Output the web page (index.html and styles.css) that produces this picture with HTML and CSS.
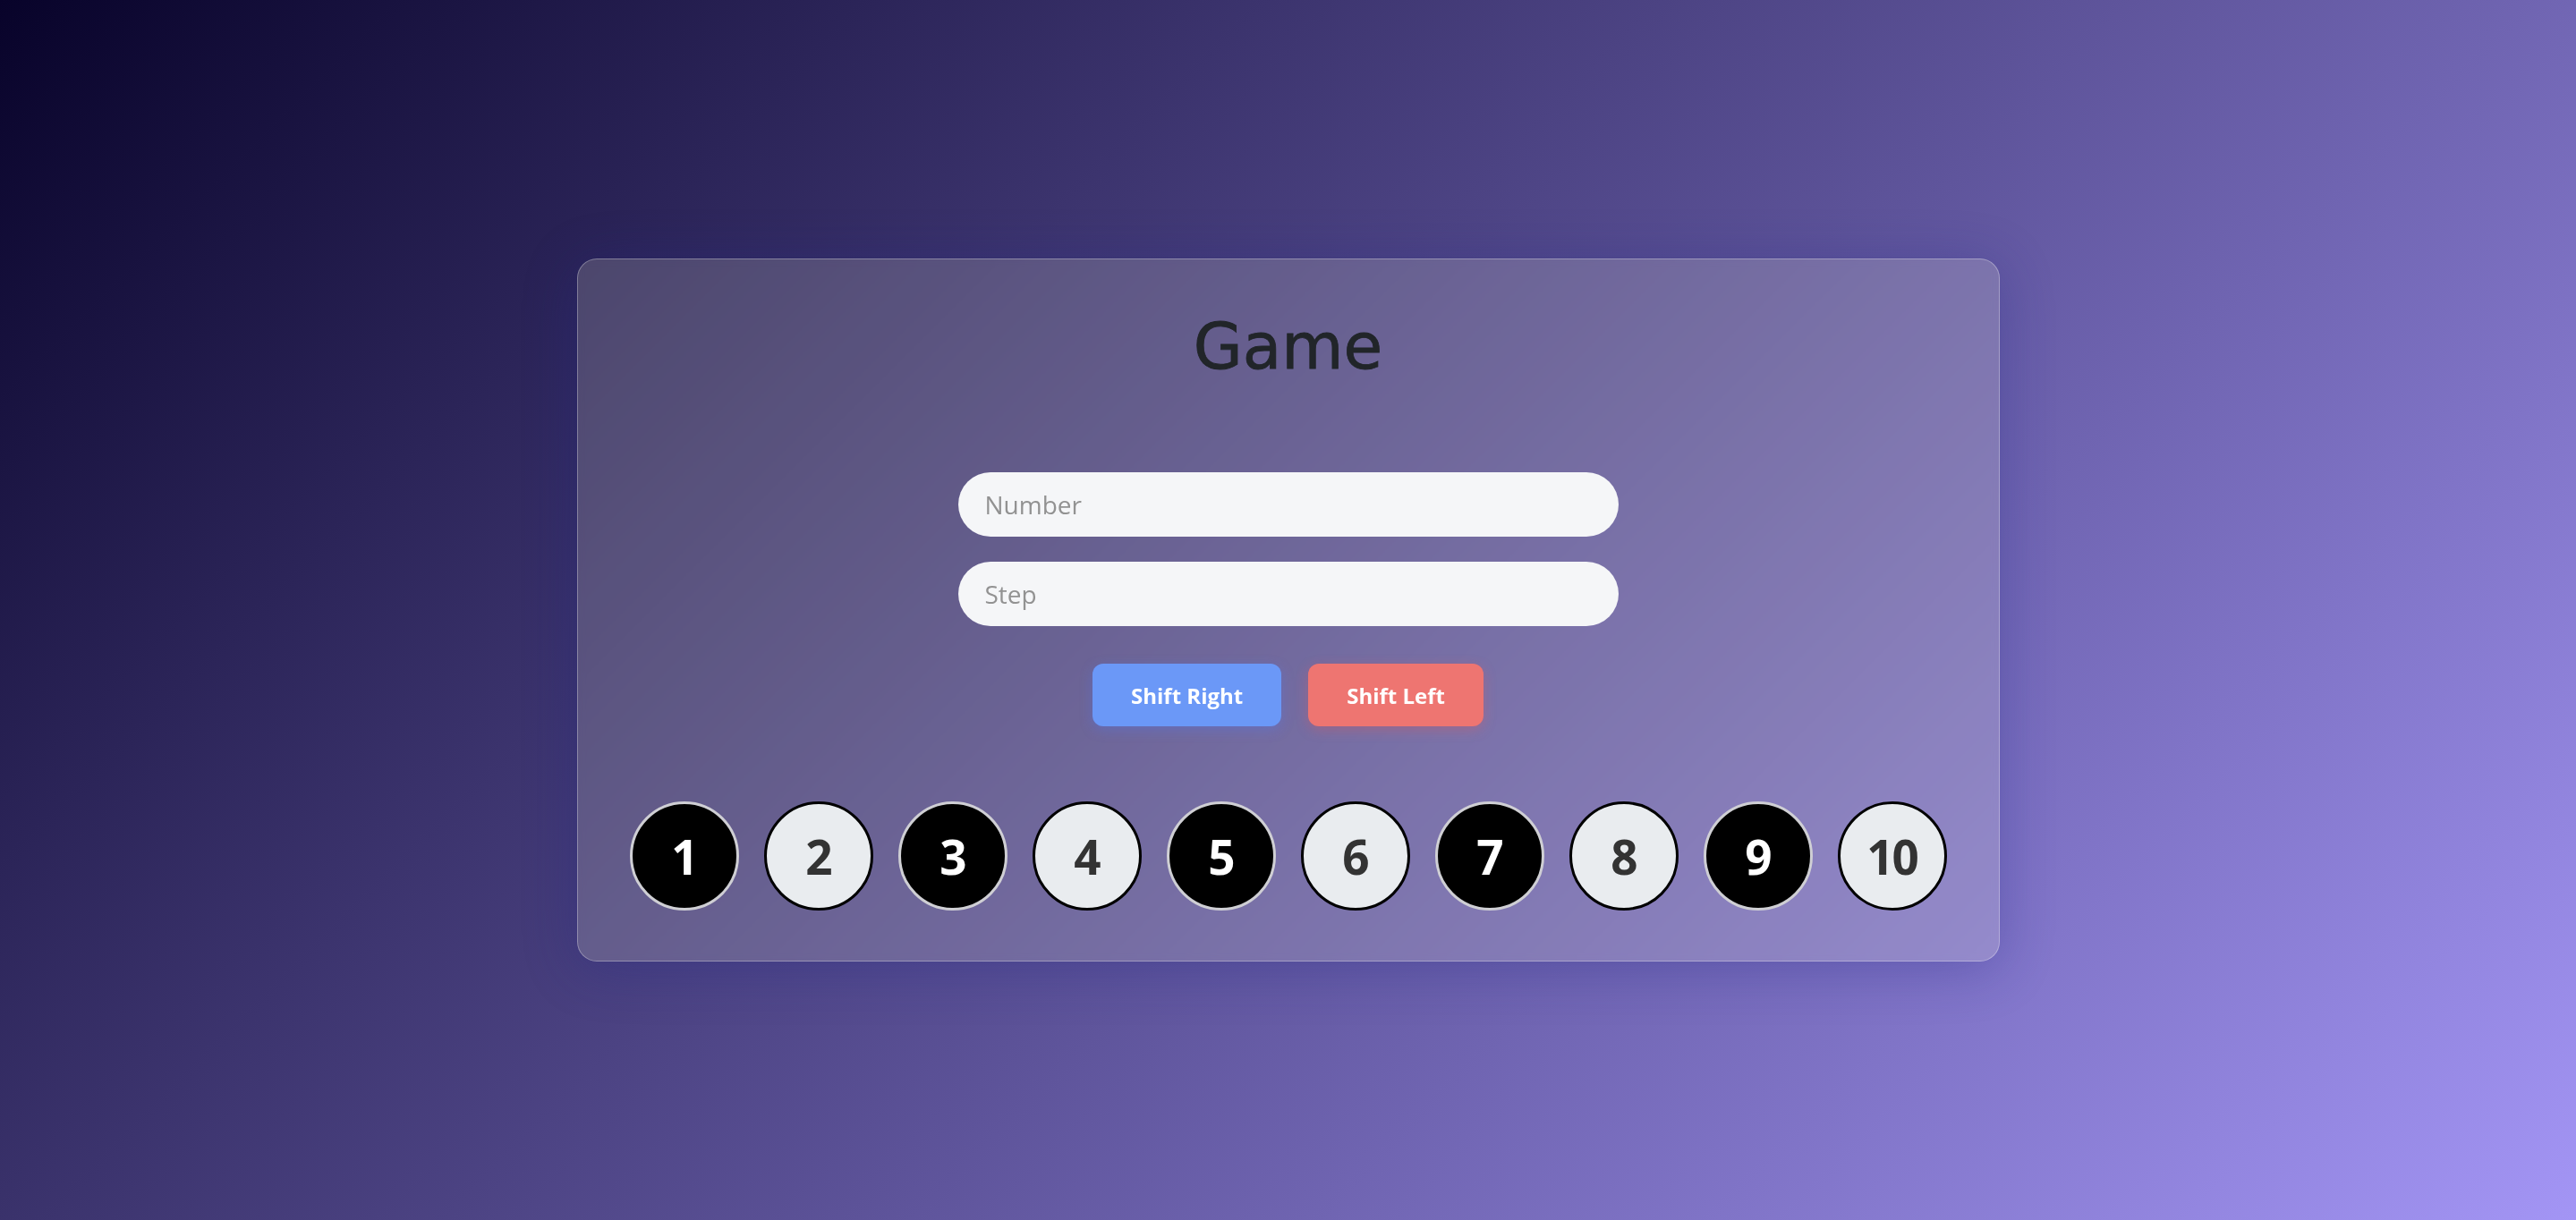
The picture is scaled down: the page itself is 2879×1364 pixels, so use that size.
FILE: index.html
```html
<!DOCTYPE html>
<html lang="en">
<head>
<meta charset="utf-8">
<title>Game</title>
<link rel="stylesheet" href="styles.css">
</head>
<body>
<main class="card">
  <h1 class="title">Game</h1>
  <form class="form">
    <input class="field" type="text" placeholder="Number">
    <input class="field" type="text" placeholder="Step">
    <div class="actions">
      <button type="button" class="btn btn-right">Shift Right</button>
      <button type="button" class="btn btn-left">Shift Left</button>
    </div>
  </form>
  <div class="balls">
    <div class="ball dark">1</div>
    <div class="ball light">2</div>
    <div class="ball dark">3</div>
    <div class="ball light">4</div>
    <div class="ball dark">5</div>
    <div class="ball light">6</div>
    <div class="ball dark">7</div>
    <div class="ball light">8</div>
    <div class="ball dark">9</div>
    <div class="ball light">10</div>
  </div>
</main>
</body>
</html>
```

FILE: styles.css
```css
* { box-sizing: border-box; }

html, body {
  margin: 0;
  height: 100%;
}

body {
  background: linear-gradient(135deg, #08032a 0%, #a395f5 100%);
  display: flex;
  align-items: center;
  justify-content: center;
  font-family: "Open Sans", "Liberation Sans", sans-serif;
}

.card {
  width: 1590px;
  height: 786px;
  border-radius: 22px;
  border: 1px solid rgba(255, 255, 255, 0.3);
  background: rgba(255, 252, 225, 0.16);
  box-shadow: 0 8px 60px rgba(31, 38, 135, 0.32);
  backdrop-filter: blur(4px);
  display: flex;
  flex-direction: column;
  align-items: center;
  padding-top: 56px;
}

.title {
  margin: 0;
  font-family: "DejaVu Sans", "Open Sans", sans-serif;
  font-weight: 400;
  font-size: 71px;
  line-height: 84px;
  color: #212529;
  -webkit-text-stroke: 0.8px #212529;
}

.form {
  margin-top: 98px;
  display: flex;
  flex-direction: column;
  align-items: center;
  gap: 28px;
}

.field {
  width: 738px;
  height: 72px;
  border: none;
  outline: none;
  border-radius: 36px;
  background: #f5f6f8;
  padding: 0 30px;
  font-family: "Open Sans", "Liberation Sans", sans-serif;
  font-size: 28px;
  color: #333;
}

.field::placeholder {
  color: #929292;
}

.actions {
  margin-top: 14px;
  display: flex;
  gap: 30px;
}

.btn {
  height: 70px;
  padding: 0 43px;
  border: none;
  border-radius: 12px;
  font-family: "Open Sans", "Liberation Sans", sans-serif;
  font-weight: 700;
  font-size: 24px;
  color: #fff;
  cursor: pointer;
}

.btn-right {
  background: #6b98f7;
  box-shadow: 0 4px 14px rgba(80, 120, 240, 0.35);
}

.btn-left {
  background: #ee7571;
  box-shadow: 0 4px 14px rgba(230, 90, 90, 0.35);
}

.balls {
  margin-top: 84px;
  display: flex;
  gap: 28px;
}

.ball {
  width: 122px;
  height: 122px;
  border-radius: 50%;
  display: flex;
  align-items: center;
  justify-content: center;
  font-weight: 700;
  font-size: 53px;
  letter-spacing: -2px;
}

.ball.dark {
  background: #000;
  border: 3px solid #cfcfd4;
  color: #fff;
}

.ball.light {
  background: #e9ecef;
  border: 3px solid #000;
  color: #333;
}
```
